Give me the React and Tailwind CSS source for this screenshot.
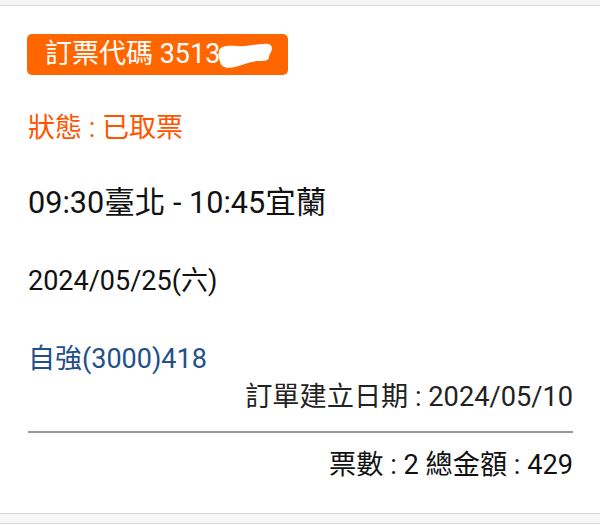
export default function App() {
  const font = { fontFamily: "Roboto, 'Noto Sans CJK TC', sans-serif" };

  return (
    <div className="w-[600px] h-[525px] bg-white overflow-hidden" style={font}>
      <div className="h-[6px] bg-[#f5f5f5] border-b border-[#d9d9d9]" />

      <div className="flex flex-col pt-[28px] pb-[32px] pl-[28px] pr-[27px] bg-white">
        {/* order code badge */}
        <div className="self-start flex items-center h-[41px] w-[261px] pl-[18px] rounded-[5px] bg-[#ff6600] text-white text-[27px] leading-none -ml-[1px]">
          <span className="shrink-0">訂票代碼 3513</span>
          <svg width="56" height="26" viewBox="0 0 56 26" className="shrink-0 -ml-[3px] mt-[2px]">
            <path
              d="M2,8 C3,3 10,2 20,3 C30,4 38,1 46,1 C50,0 55,1 55,5 C55,9 52,11 52,14 C52,18 47,18 42,18 C34,18 26,22 18,24 C10,26 4,24 3,19 C2,15 1,11 2,8 Z"
              fill="#ffffff"
            />
          </svg>
        </div>

        <div className="mt-[37px] leading-[32px] text-[27px] text-[#ff5500]">狀態 : 已取票</div>

        <div className="mt-[41px] leading-[36px] text-[30.6px] text-[#111]">09:30臺北 - 10:45宜蘭</div>

        <div className="mt-[44px] leading-[32px] text-[27px] text-[#111]">2024/05/25(六)</div>

        <div className="mt-[46px] leading-[32px] text-[27px] text-[#23508a]">自強(3000)418</div>

        <div className="mt-[6px] leading-[32px] text-[27.2px] text-[#222] text-right">訂單建立日期 : 2024/05/10</div>

        <div className="mt-[18px] h-[2px] bg-[#999]" />

        <div className="mt-[16px] leading-[32px] text-[27.2px] text-[#111] text-right">票數 : 2 總金額 : 429</div>
      </div>

      <div className="h-[11px] bg-[#f7f7f7] border-t border-[#d9d9d9] border-b" />
    </div>
  );
}
